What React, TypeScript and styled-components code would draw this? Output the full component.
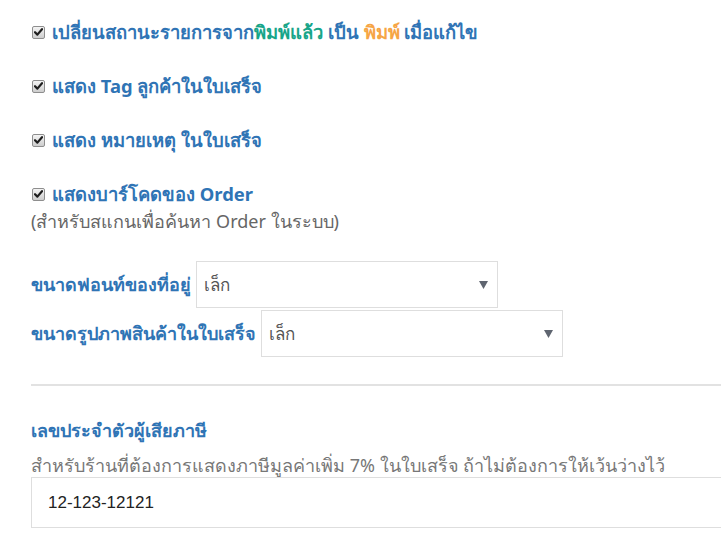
import styled, { createGlobalStyle } from 'styled-components'

const GlobalStyle = createGlobalStyle`
  html, body {
    margin: 0;
    padding: 0;
    background: #ffffff;
  }
  body {
    font-family: "Noto Sans", "Liberation Sans", sans-serif;
    color: #555;
  }
`

function Check() {
  return (
    <Box>
      <svg width="9" height="8" viewBox="0 0 9 8">
        <path d="M1 4.2 L3.4 6.6 L8 1.2" fill="none" stroke="#1e1e1e" strokeWidth="2.2" strokeLinecap="round" strokeLinejoin="round" />
      </svg>
    </Box>
  )
}

function Caret() {
  return (
    <svg width="9" height="8" viewBox="0 0 9 8">
      <path d="M0 0 H9 L4.5 8 Z" fill="#5f6570" />
    </svg>
  )
}

export default function App() {
  return (
    <Page>
      <GlobalStyle />
      <CheckRow>
        <Check />
        <CheckLabel>
          เปลี่ยนสถานะรายการจาก<Green>พิมพ์แล้ว</Green> เป็น <Orange>พิมพ์</Orange> เมื่อแก้ไข
        </CheckLabel>
      </CheckRow>
      <CheckRow>
        <Check />
        <CheckLabel>แสดง Tag ลูกค้าในใบเสร็จ</CheckLabel>
      </CheckRow>
      <CheckRow>
        <Check />
        <CheckLabel>แสดง หมายเหตุ ในใบเสร็จ</CheckLabel>
      </CheckRow>
      <CheckRow $tight>
        <Check />
        <CheckLabel>แสดงบาร์โคดของ Order</CheckLabel>
      </CheckRow>
      <Note>(สำหรับสแกนเพื่อค้นหา Order ในระบบ)</Note>

      <SelectGroup>
        <SelectRow>
          <FieldLabel>ขนาดฟอนท์ของที่อยู่</FieldLabel>
          <Select>
            <span>เล็ก</span>
            <Caret />
          </Select>
        </SelectRow>
        <SelectRow>
          <FieldLabel>ขนาดรูปภาพสินค้าในใบเสร็จ</FieldLabel>
          <Select>
            <span>เล็ก</span>
            <Caret />
          </Select>
        </SelectRow>
      </SelectGroup>

      <Divider />

      <Section>
        <FieldLabel>เลขประจำตัวผู้เสียภาษี</FieldLabel>
        <Help>สำหรับร้านที่ต้องการแสดงภาษีมูลค่าเพิ่ม 7% ในใบเสร็จ ถ้าไม่ต้องการให้เว้นว่างไว้</Help>
        <Input>12-123-12121</Input>
      </Section>
    </Page>
  )
}

// ----- STYLES -----

const Page = styled.div`
  width: 721px;
  height: 549px;
  overflow: hidden;
  padding: 19px 0 0 31px;
  box-sizing: border-box;
`

const CheckRow = styled.div<{ $tight?: boolean }>`
  display: flex;
  align-items: center;
  gap: 7px;
  height: 26px;
  margin-bottom: ${({ $tight }) => ($tight ? '0' : '28px')};
`

const Box = styled.span`
  width: 13px;
  height: 13px;
  box-sizing: border-box;
  border: 1px solid #8e8e8e;
  border-radius: 2px;
  background: linear-gradient(#f4f4f4, #cdcdcd);
  display: flex;
  align-items: center;
  justify-content: center;
  margin-left: 1px;
`

const CheckLabel = styled.span`
  font-size: 18.4px;
  font-weight: 700;
  color: #2f74b5;
  white-space: nowrap;
`

const Green = styled.span`
  color: #17a589;
`

const Orange = styled.span`
  color: #f6a545;
`

const Note = styled.div`
  font-size: 18px;
  color: #666;
  line-height: 28px;
`

const SelectGroup = styled.div`
  display: flex;
  flex-direction: column;
  gap: 2px;
  margin-top: 26px;
`

const SelectRow = styled.div`
  display: flex;
  align-items: center;
  gap: 5px;
`

const FieldLabel = styled.div`
  font-size: 18px;
  font-weight: 700;
  color: #2f74b5;
  white-space: nowrap;
`

const Select = styled.div`
  width: 302px;
  height: 47px;
  box-sizing: border-box;
  border: 1px solid #dedede;
  display: flex;
  align-items: center;
  justify-content: space-between;
  padding: 0 9px 0 7px;
  font-size: 17px;
  color: #555;
`

const Divider = styled.hr`
  border: none;
  border-top: 2px solid #e2e2e2;
  margin: 27px 0 0 0;
`

const Section = styled.div`
  margin-top: 30px;
  display: flex;
  flex-direction: column;
`

const Help = styled.div`
  font-size: 18px;
  color: #777;
  margin-top: 8px;
  line-height: 24px;
  white-space: nowrap;
`

const Input = styled.div`
  height: 51px;
  box-sizing: border-box;
  border: 1px solid #dedede;
  border-right: none;
  display: flex;
  align-items: center;
  padding-left: 16px;
  font-family: "Liberation Sans", Arial, sans-serif;
  font-size: 17px;
  color: #222;
`
